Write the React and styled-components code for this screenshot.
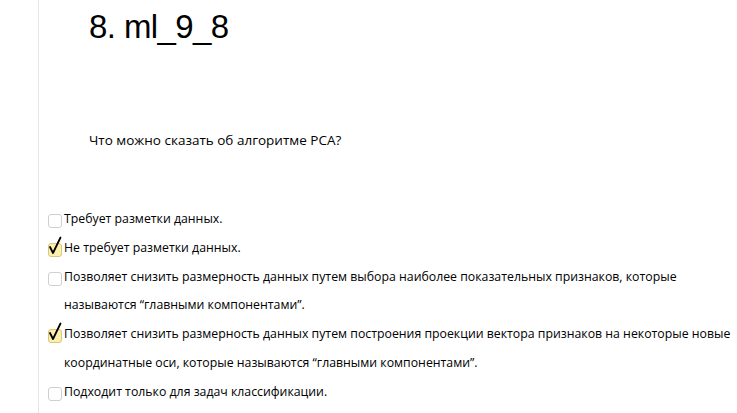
import React from 'react';
import styled, { createGlobalStyle } from 'styled-components';

const GlobalStyle = createGlobalStyle`
  body {
    margin: 0;
    background: #fff;
    font-family: "Open Sans", "Noto Sans", sans-serif;
    color: #000;
  }
`;

const Page = styled.div`
  margin-left: 38px;
  min-height: 413px;
  border-left: 1px solid #e6e6e6;
  padding-left: 9px;
`;

const Title = styled.h1`
  margin: 0;
  padding: 7px 0 0 41px;
  font-family: "Liberation Sans", Arial, sans-serif;
  font-weight: 400;
  font-size: 33px;
  letter-spacing: -0.6px;
  line-height: 40px;
`;

const Question = styled.p`
  margin: 0;
  padding: 83px 0 0 41px;
  font-size: 13.5px;
  line-height: 20px;
`;

const Options = styled.div`
  display: flex;
  flex-direction: column;
  padding-top: 55px;
`;

const Option = styled.label`
  display: flex;
  align-items: flex-start;
  font-size: 12.3px;
  line-height: 28.8px;
`;

const Box = styled.span`
  position: relative;
  flex: none;
  width: 12px;
  height: 12px;
  margin: 9px 2px 0 0;
  border: 1px solid ${({ checked }) => (checked ? '#d9c778' : '#cfcfcf')};
  border-radius: 3px;
  background: ${({ checked }) => (checked ? '#fbeeae' : '#fff')};

  svg {
    position: absolute;
    left: -1px;
    top: -8px;
  }
`;

const Check = () => (
  <svg width="14" height="20" viewBox="0 0 14 20">
    <path d="M2 11 L5 17 L12.5 1.5" fill="none" stroke="#000" strokeWidth="1.8" strokeLinecap="round" strokeLinejoin="round" />
  </svg>
);

const answers = [
  { text: 'Требует разметки данных.', checked: false },
  { text: 'Не требует разметки данных.', checked: true },
  { text: 'Позволяет снизить размерность данных путем выбора наиболее показательных признаков, которые называются “главными компонентами”.', checked: false },
  { text: 'Позволяет снизить размерность данных путем построения проекции вектора признаков на некоторые новые координатные оси, которые называются “главными компонентами”.', checked: true },
  { text: 'Подходит только для задач классификации.', checked: false },
];

const App = () => (
  <>
    <GlobalStyle />
    <Page>
      <Title>8. ml_9_8</Title>
      <Question>Что можно сказать об алгоритме PCA?</Question>
      <Options>
        {answers.map((a) => (
          <Option key={a.text}>
            <Box checked={a.checked}>{a.checked && <Check />}</Box>
            <span>{a.text}</span>
          </Option>
        ))}
      </Options>
    </Page>
  </>
);

export default App;
